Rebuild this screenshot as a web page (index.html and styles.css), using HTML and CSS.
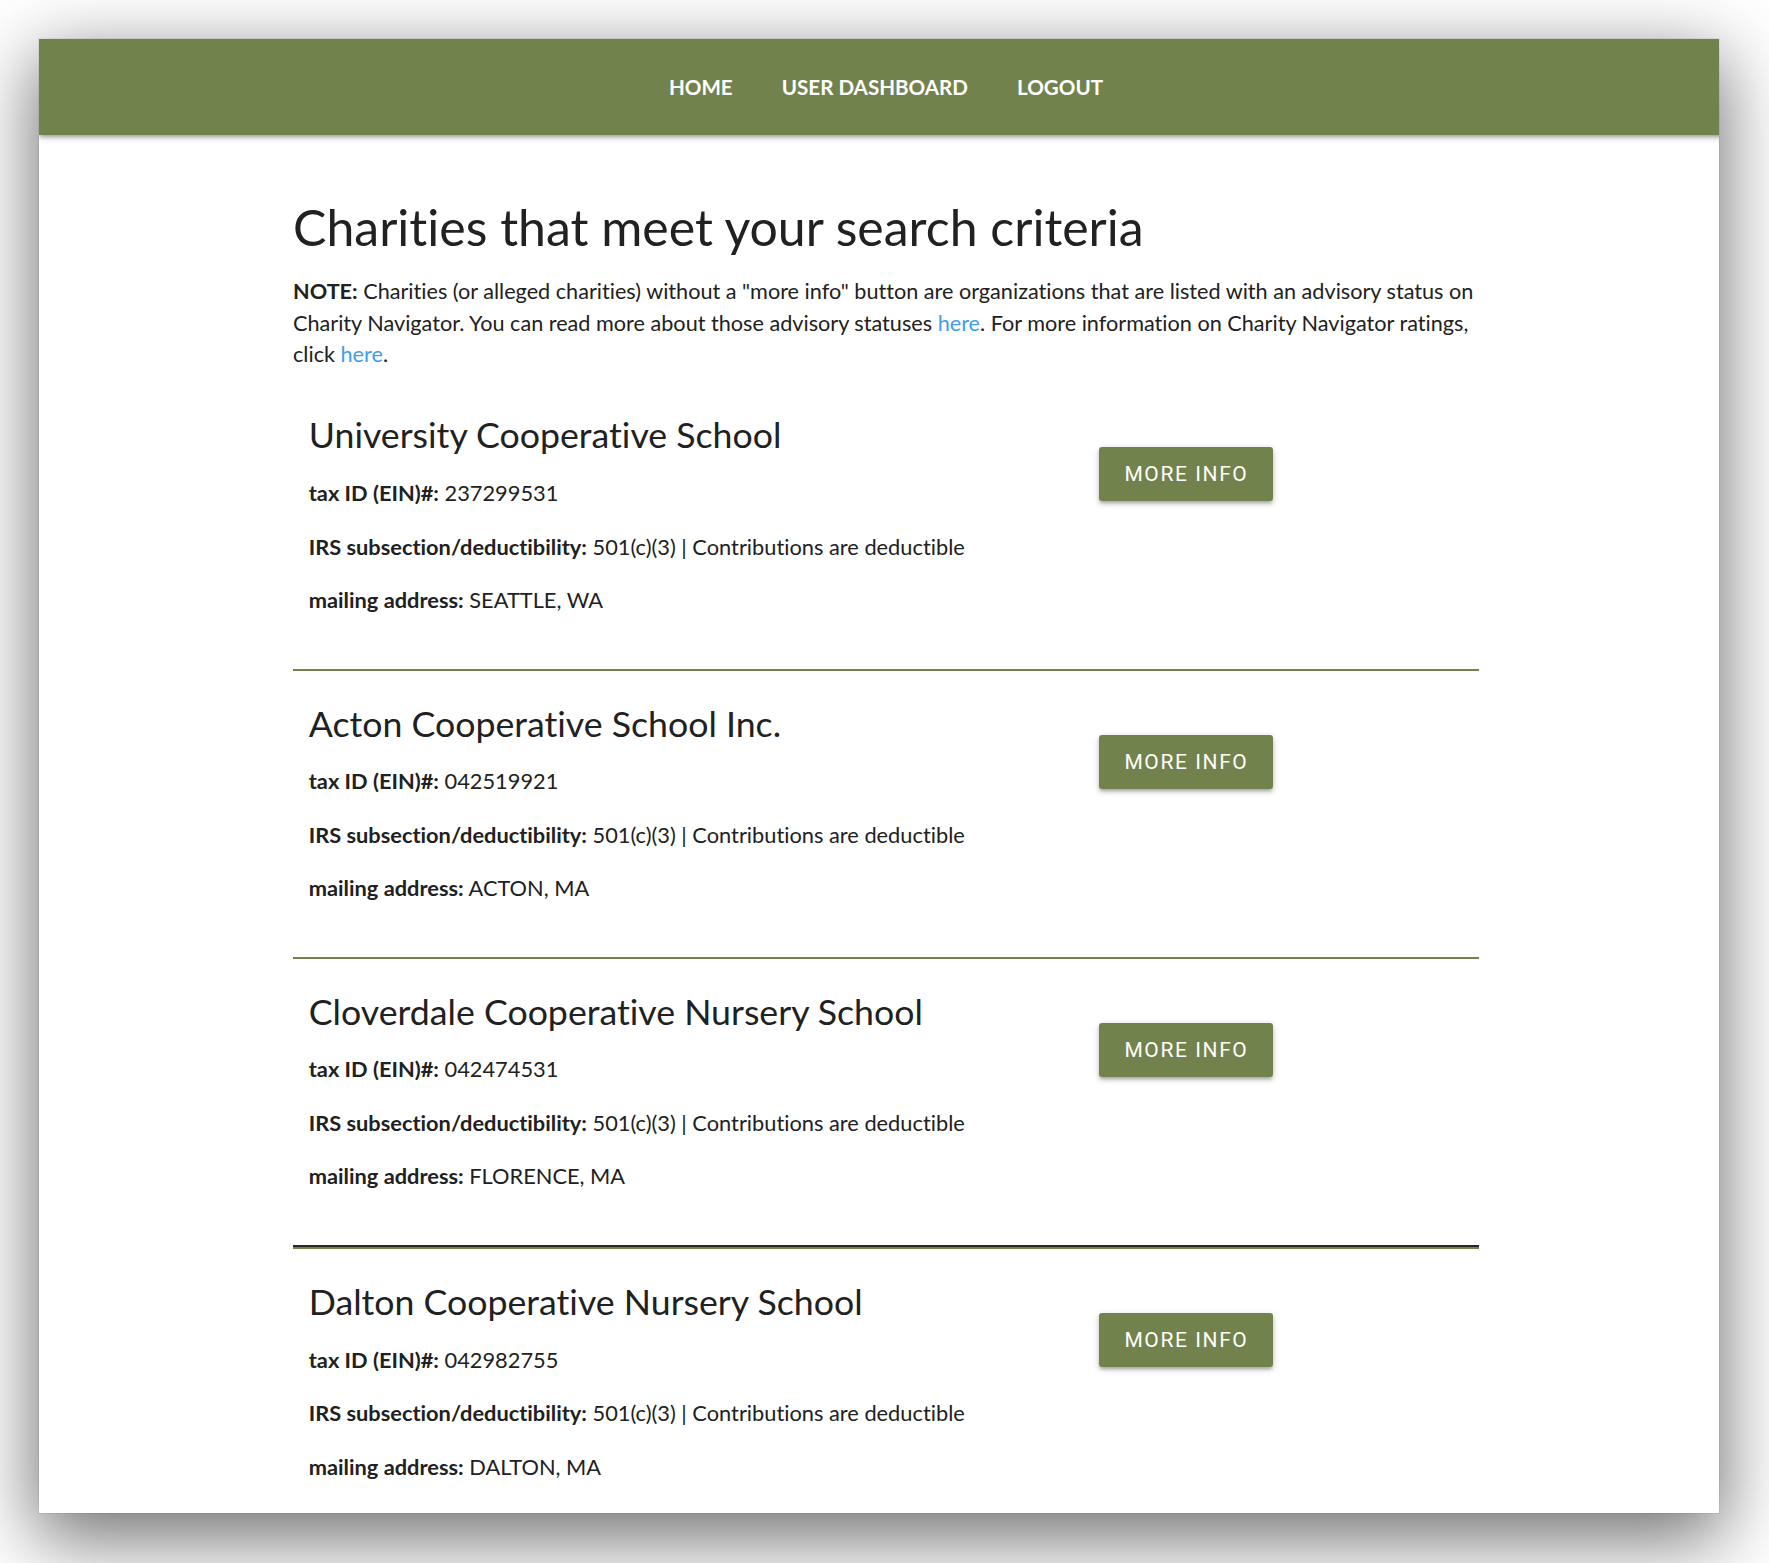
FILE: index.html
```html
<!DOCTYPE html>
<html lang="en">
<head>
<meta charset="utf-8">
<title>Charities that meet your search criteria</title>
<link rel="stylesheet" href="styles.css">
</head>
<body>
<div class="window">
  <div class="viewport">
    <nav class="topnav">
      <ul class="nav-links">
        <li><a href="#">Home</a></li>
        <li><a href="#">User Dashboard</a></li>
        <li><a href="#">Logout</a></li>
      </ul>
    </nav>
    <main class="container">
      <h1 class="page-title">Charities that meet your search criteria</h1>
      <p class="note"><b>NOTE:</b> Charities (or alleged charities) without a "more info" button are organizations that are listed with an advisory status on Charity Navigator. You can read more about those advisory statuses <a href="#">here</a>. For more information on Charity Navigator ratings, click <a href="#">here</a>.</p>

      <section class="charity">
        <div class="charity-info">
          <h2 class="charity-name">University Cooperative School</h2>
          <p><b>tax ID (EIN)#:</b> 237299531</p>
          <p><b>IRS subsection/deductibility:</b> 501(c)(3) | Contributions are deductible</p>
          <p><b>mailing address:</b> SEATTLE, WA</p>
        </div>
        <div class="charity-action"><a class="btn" href="#">More Info</a></div>
      </section>
      <hr class="divider">

      <section class="charity">
        <div class="charity-info">
          <h2 class="charity-name">Acton Cooperative School Inc.</h2>
          <p><b>tax ID (EIN)#:</b> 042519921</p>
          <p><b>IRS subsection/deductibility:</b> 501(c)(3) | Contributions are deductible</p>
          <p><b>mailing address:</b> ACTON, MA</p>
        </div>
        <div class="charity-action"><a class="btn" href="#">More Info</a></div>
      </section>
      <hr class="divider">

      <section class="charity">
        <div class="charity-info">
          <h2 class="charity-name">Cloverdale Cooperative Nursery School</h2>
          <p><b>tax ID (EIN)#:</b> 042474531</p>
          <p><b>IRS subsection/deductibility:</b> 501(c)(3) | Contributions are deductible</p>
          <p><b>mailing address:</b> FLORENCE, MA</p>
        </div>
        <div class="charity-action"><a class="btn" href="#">More Info</a></div>
      </section>
      <hr class="divider divider-strong">

      <section class="charity">
        <div class="charity-info">
          <h2 class="charity-name">Dalton Cooperative Nursery School</h2>
          <p><b>tax ID (EIN)#:</b> 042982755</p>
          <p><b>IRS subsection/deductibility:</b> 501(c)(3) | Contributions are deductible</p>
          <p><b>mailing address:</b> DALTON, MA</p>
        </div>
        <div class="charity-action"><a class="btn" href="#">More Info</a></div>
      </section>
      <hr class="divider">
    </main>
  </div>
</div>
</body>
</html>
```

FILE: styles.css
```css
html, body {
  margin: 0;
  padding: 0;
  background: #ffffff;
}

body {
  box-sizing: border-box;
  min-height: 100vh;
  padding: 39px 0 0 39px;
  font-family: "Lato", "Noto Sans", sans-serif;
  font-variant-ligatures: no-common-ligatures;
  color: #212121;
}

.window {
  width: 1680px;
  height: 1474px;
  overflow: hidden;
  background: #ffffff;
  box-shadow: 0 22px 70px 4px rgba(0, 0, 0, 0.56), 0 0 0 1px rgba(0, 0, 0, 0.06);
}

.viewport {
  width: 1694px;
}

.topnav {
  height: 96px;
  background: #72824c;
  display: flex;
  align-items: center;
  justify-content: center;
  box-shadow: 0 3px 3px 0 rgba(0, 0, 0, 0.14), 0 4px 2px -3px rgba(0, 0, 0, 0.12), 0 2px 8px 0 rgba(0, 0, 0, 0.2);
  position: relative;
}

.nav-links {
  list-style: none;
  margin: 0;
  padding: 0;
  display: flex;
}

.nav-links a {
  display: block;
  padding: 0 24.5px;
  color: #ffffff;
  text-decoration: none;
  text-transform: uppercase;
  font-weight: 700;
  font-size: 20.6px;
  line-height: 96px;
}

.container {
  width: 1186px;
  margin: 0 auto;
  padding-top: 65px;
}

.page-title {
  margin: 0;
  font-size: 50px;
  font-weight: 400;
  line-height: 55px;
}

.note {
  margin: 21px 0 0 0;
  font-size: 21.65px;
  line-height: 31.7px;
}

.note a {
  color: #3f9ded;
  text-decoration: none;
}

.charity {
  display: grid;
  grid-template-columns: 2fr 1fr;
  padding: 35.7px 0 55.6px 0;
}

.note + .charity {
  margin-top: 11.7px;
}

.charity-info {
  padding: 0 15.75px;
  display: flex;
  flex-direction: column;
  gap: 26.5px;
}

.charity-name {
  margin: 0 0 1.3px 0;
  font-size: 35.7px;
  font-weight: 400;
  line-height: 33px;
}

.charity-info p {
  margin: 0;
  font-size: 21.8px;
  line-height: 27px;
}

.charity-action {
  padding: 28.3px 15.75px 0 15.75px;
}

.btn {
  display: inline-block;
  height: 54px;
  line-height: 54px;
  padding: 0 25px;
  background: #72824c;
  color: #ffffff;
  border-radius: 3px;
  font-family: "Roboto", "Liberation Sans", sans-serif;
  font-size: 21px;
  letter-spacing: 1.6px;
  text-transform: uppercase;
  text-decoration: none;
  box-shadow: 0 3px 3px 0 rgba(0, 0, 0, 0.14), 0 4px 2px -3px rgba(0, 0, 0, 0.12), 0 2px 7px 0 rgba(0, 0, 0, 0.2);
}

.divider {
  margin: 0;
  border: 0;
  height: 0;
  border-top: 2px solid #72824c;
}

.divider-strong {
  border-top: 2px solid #262b1f;
  border-bottom: 2px solid #72824c;
}
```
